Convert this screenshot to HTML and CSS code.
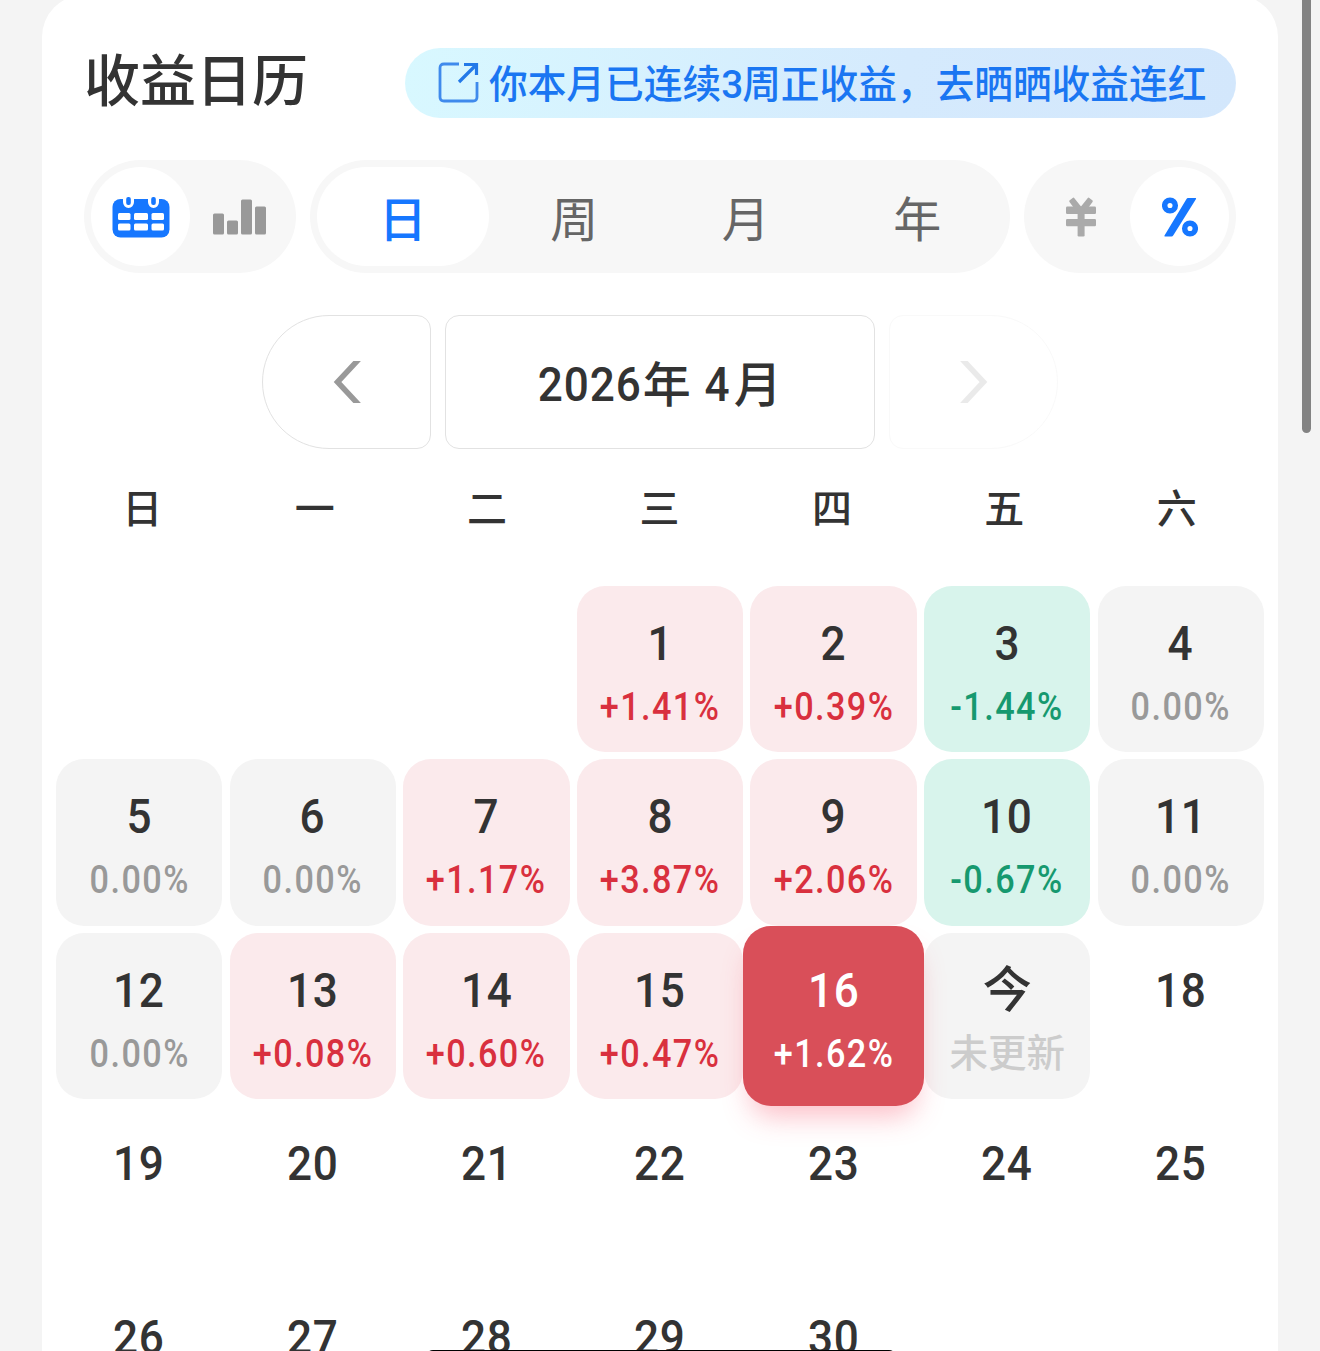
FILE: index.html
```html
<!DOCTYPE html>
<html lang="zh-CN">
<head>
    <meta charset="UTF-8">
    <meta name="viewport" content="width=device-width, initial-scale=1.0">
    <title>收益日历</title>
    <link rel="stylesheet" href="styles.css">
</head>
<body>
    <div class="card">
        <div class="card-header">
            <h1 class="title">收益日历</h1>
            <a class="share-pill">
                <svg class="share-icon" viewBox="0 0 42 42" fill="none" stroke="#3f8aec" stroke-width="2.8">
                    <path d="M21 2H6Q2 2 2 6V35Q2 39 6 39H35Q39 39 39 35V20"/>
                    <path d="M26 2.500H38.500V13M38 3L21 20" stroke="#2379e8" stroke-width="3.2"/>
                </svg>
                <span>你本月已连续<span class="pill-num">3</span>周正收益，去晒晒收益连红</span>
            </a>
        </div>

        <div class="toolbar">
            <div class="switch">
                <div class="switch-item active">
                    <svg width="58" height="42" viewBox="0 0 58 42">
                        <rect x="0.500" y="3" width="57" height="38.500" rx="8" fill="#1677ff"/>
                        <path d="M11 0V6a5.500 6 0 0 0 11 0V0ZM36 0V6a5.500 6 0 0 0 11 0V0Z" fill="#fff"/>
                        <rect x="14.200" y="1" width="4.600" height="8" rx="2" fill="#1677ff"/>
                        <rect x="39.200" y="1" width="4.600" height="8" rx="2" fill="#1677ff"/>
                        <g fill="#fff">
                            <rect x="6" y="17" width="12.500" height="7" rx="1.500"/>
                            <rect x="22" y="17" width="14" height="7" rx="1.500"/>
                            <rect x="39.500" y="17" width="12.500" height="7" rx="1.500"/>
                            <rect x="6" y="27.500" width="12.500" height="7" rx="1.500"/>
                            <rect x="22" y="27.500" width="14" height="7" rx="1.500"/>
                            <rect x="39.500" y="27.500" width="12.500" height="7" rx="1.500"/>
                        </g>
                    </svg>
                </div>
                <div class="switch-item">
                    <svg width="54" height="36" viewBox="0 0 54 36" fill="#999">
                        <rect x="0" y="14.500" width="11" height="21" rx="1.500"/>
                        <rect x="14" y="21.500" width="11" height="14" rx="1.500"/>
                        <rect x="28" y="0.500" width="11" height="35" rx="1.500"/>
                        <rect x="42" y="7.500" width="11" height="28" rx="1.500"/>
                    </svg>
                </div>
            </div>
            <div class="tabs">
                <div class="tab active">日</div>
                <div class="tab">周</div>
                <div class="tab">月</div>
                <div class="tab">年</div>
            </div>
            <div class="switch">
                <div class="switch-item">
                    <svg width="30" height="40" viewBox="0 0 30 40" fill="#aaa">
                        <path d="M7 .7L3.400 3.600Q3 4.200 3.500 4.900L11 15H19L26.500 4.900Q27 4.200 26.600 3.600L23 .7Q22.400 .3 21.800 1L15 9.500L8.200 1Q7.600 .3 7 .7Z"/>
                        <rect x="0" y="9.500" width="30" height="7.500" rx="1.200"/>
                        <rect x="0" y="22" width="30" height="7.200" rx="1.200"/>
                        <rect x="11.600" y="12" width="7" height="27.500" rx="1.200"/>
                    </svg>
                </div>
                <div class="switch-item active">
                    <svg width="36" height="40" viewBox="0 0 36 40" fill="none" stroke="#1677ff" stroke-width="5.500">
                        <circle cx="8" cy="8.500" r="5.300"/>
                        <circle cx="28" cy="31.500" r="5.300"/>
                        <path d="M26 1H33.500Q34.500 1 34 2L11.500 38Q10.500 39.500 9.500 39.500H3Q2 39.500 2.500 38.500L24.500 2Q25 1 26 1Z" fill="#1677ff" stroke="none"/>
                    </svg>
                </div>
            </div>
        </div>

        <div class="month-nav">
            <div class="nav-btn prev">
                <svg width="28" height="42" viewBox="0 0 28 42" fill="none" stroke="#999" stroke-width="5.500">
                    <path d="M26 -2L4.500 21L26 44"/>
                </svg>
            </div>
            <div class="month"><span class="num">2026</span>年<span class="num month-num">4</span>月</div>
            <div class="nav-btn next">
                <svg width="28" height="42" viewBox="0 0 28 42" fill="none" stroke="#999" stroke-width="5.500">
                    <path d="M2 -2L23.500 21L2 44"/>
                </svg>
            </div>
        </div>

        <div class="weekdays">
            <span>日</span><span>一</span><span>二</span><span>三</span><span>四</span><span>五</span><span>六</span>
        </div>

        <div class="days">
            <div class="day"></div>
            <div class="day"></div>
            <div class="day"></div>
            <div class="day up"><b>1</b><i>+1.41%</i></div>
            <div class="day up"><b>2</b><i>+0.39%</i></div>
            <div class="day down"><b>3</b><i>-1.44%</i></div>
            <div class="day flat"><b>4</b><i>0.00%</i></div>

            <div class="day flat"><b>5</b><i>0.00%</i></div>
            <div class="day flat"><b>6</b><i>0.00%</i></div>
            <div class="day up"><b>7</b><i>+1.17%</i></div>
            <div class="day up"><b>8</b><i>+3.87%</i></div>
            <div class="day up"><b>9</b><i>+2.06%</i></div>
            <div class="day down"><b>10</b><i>-0.67%</i></div>
            <div class="day flat"><b>11</b><i>0.00%</i></div>

            <div class="day flat"><b>12</b><i>0.00%</i></div>
            <div class="day up"><b>13</b><i>+0.08%</i></div>
            <div class="day up"><b>14</b><i>+0.60%</i></div>
            <div class="day up"><b>15</b><i>+0.47%</i></div>
            <div class="day selected"><b>16</b><i>+1.62%</i></div>
            <div class="day today"><b>今</b><i>未更新</i></div>
            <div class="day"><b>18</b></div>

            <div class="day"><b>19</b></div>
            <div class="day"><b>20</b></div>
            <div class="day"><b>21</b></div>
            <div class="day"><b>22</b></div>
            <div class="day"><b>23</b></div>
            <div class="day"><b>24</b></div>
            <div class="day"><b>25</b></div>

            <div class="day"><b>26</b></div>
            <div class="day"><b>27</b></div>
            <div class="day"><b>28</b></div>
            <div class="day"><b>29</b></div>
            <div class="day"><b>30</b></div>
        </div>
    </div>

    <div class="scrollbar"></div>
    <div class="home-indicator"></div>
</body>
</html>
```

FILE: styles.css
```css
* {
    box-sizing: border-box;
}

body {
    margin: 0;
    height: 1351px;
    overflow: hidden;
    position: relative;
    background-color: #f4f4f4;
    color: #333;
    font-family: Roboto, "Noto Sans CJK SC", sans-serif;
}

svg {
    display: block;
}

.card {
    width: 1236px;
    height: 1356px;
    margin: -5px auto 0;
    padding: 53px 14px 0;
    background-color: #fff;
    border-radius: 42px 42px 0 0;
}

.card-header {
    display: flex;
    justify-content: space-between;
    height: 70px;
    padding: 0 28px;
}

.title {
    margin: 0;
    font-size: 56px;
    font-weight: 500;
    line-height: 68px;
}

.share-pill {
    display: flex;
    align-items: center;
    width: 831px;
    height: 70px;
    padding-left: 33px;
    border-radius: 35px;
    background: linear-gradient(100deg, #d8f8ff, #d5eafd 60%, #d3e7fc);
    color: #1a76f2;
    font-size: 38.7px;
    font-weight: 500;
    line-height: 70px;
    white-space: nowrap;
}

.share-pill > span {
    padding-top: 3px;
}

.share-icon {
    width: 42px;
    height: 42px;
    margin-right: 9px;
}

.pill-num {
    letter-spacing: -1px;
}

.toolbar {
    display: flex;
    justify-content: space-between;
    margin-top: 42px;
    padding: 0 28px;
}

.switch,
.tabs {
    display: flex;
    height: 113px;
    padding: 7px;
    border-radius: 57px;
    background-color: #f7f7f7;
}

.switch {
    width: 212px;
}

.tabs {
    width: 700px;
}

.switch-item {
    flex: 1;
    display: flex;
    align-items: center;
    justify-content: center;
    border-radius: 50px;
}

.tab {
    flex: 1;
    border-radius: 50px;
    text-align: center;
    font-size: 48px;
    line-height: 107px;
    color: #666;
}

.switch-item.active,
.tab.active {
    background-color: #fff;
}

.tab.active {
    color: #1677ff;
    font-weight: 500;
}

.month-nav {
    display: flex;
    justify-content: center;
    gap: 14px;
    height: 134px;
    margin-top: 42px;
}

.nav-btn,
.month {
    display: flex;
    align-items: center;
    justify-content: center;
    border: 1px solid #e2e2e2;
    border-radius: 14px;
}

.nav-btn {
    width: 169px;
}

.prev {
    border-radius: 67px 14px 14px 67px;
}

.next {
    border-radius: 14px 67px 67px 14px;
    opacity: 0.2;
}

.month {
    width: 430px;
    padding-bottom: 3px;
    font-size: 48px;
    font-weight: 500;
}

.num {
    padding-top: 8px;
    font-size: 49px;
    letter-spacing: 1px;
    transform: scaleX(0.9);
    margin: 0 -5px 0 -6px;
}

.month-num {
    margin: 0 2px 0 12px;
}

.weekdays {
    display: grid;
    grid-template-columns: repeat(7, 1fr);
    height: 137px;
    padding-right: 1px;
    text-align: center;
    font-size: 40px;
    font-weight: 500;
    line-height: 121px;
}

.days {
    display: grid;
    grid-template-columns: repeat(7, 1fr);
    grid-auto-rows: 166.3px;
    gap: 7.2px;
}

.day {
    display: flex;
    flex-direction: column;
    align-items: center;
    padding-top: 28px;
    border-radius: 28px;
}

/* narrow the numerals a little, closer to a DIN face */
.day b {
    height: 60px;
    font-size: 49px;
    font-weight: 500;
    line-height: 60px;
    letter-spacing: 1px;
    transform: scaleX(0.9);
}

.day i {
    margin-top: 8px;
    font-size: 38px;
    font-style: normal;
    font-weight: 500;
    line-height: 50px;
    letter-spacing: 1.6px;
    transform: scaleX(0.9);
}

.up {
    background-color: #fbeaec;
}

.up i {
    color: #d9303e;
}

.down {
    background-color: #d8f4ec;
}

.down i {
    color: #16996f;
}

.flat,
.today {
    background-color: #f4f4f4;
}

.flat i {
    color: #999;
}

.today b,
.today i {
    letter-spacing: 0;
    transform: none;
}

.today i {
    color: #ccc;
    font-size: 38.5px;
}

/* selected day grows over its neighbours */
.selected {
    z-index: 1;
    margin: -7px;
    padding-top: 35px;
    background-color: #d94f59;
    color: #fff;
    box-shadow: 0 18px 28px -8px rgba(245, 70, 95, 0.35);
}

.scrollbar {
    position: absolute;
    top: -20px;
    right: 9px;
    width: 9px;
    height: 453px;
    border-radius: 5px;
    background-color: #838383;
}

.home-indicator {
    position: absolute;
    top: 1350px;
    left: 426px;
    width: 470px;
    height: 14px;
    border-radius: 7px;
    background-color: #000;
}
```
